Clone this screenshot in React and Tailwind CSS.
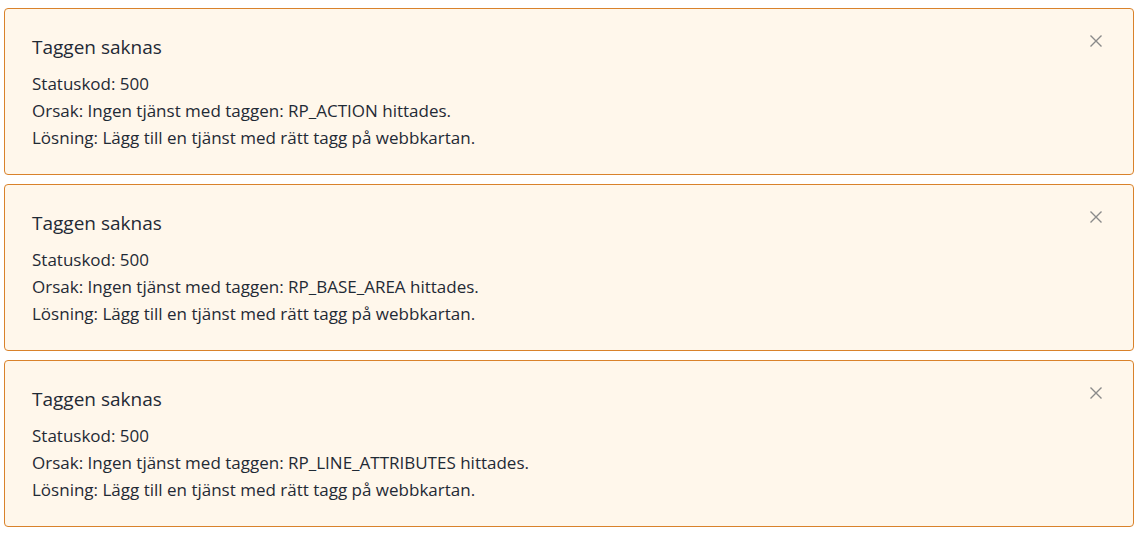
import React from "react";

const alerts = [
  { tag: "RP_ACTION" },
  { tag: "RP_BASE_AREA" },
  { tag: "RP_LINE_ATTRIBUTES" },
];

const CloseIcon = () => (
  <svg width="14" height="14" viewBox="0 0 14 14" fill="none">
    <path d="M1.5 1.5L12.5 12.5M12.5 1.5L1.5 12.5" stroke="#8a8a8a" strokeWidth="1.4" />
  </svg>
);

const TagAlert = ({ tag }) => {
  return (
    <div className="relative border border-[#d9822b] bg-[#fff7eb] rounded-[4px] pl-[27px] pr-10 pt-[24px] pb-[23px] text-[#1f2a35]">
      <button className="absolute right-[29px] top-[24px] w-4 h-4 flex items-center justify-center">
        <CloseIcon />
      </button>
      <h4 className="text-[19px] leading-[28px] mb-[9px]">Taggen saknas</h4>
      <div className="text-[17px] leading-[27px]">
        <p>Statuskod: 500</p>
        <p>Orsak: Ingen tjänst med taggen: {tag} hittades.</p>
        <p>Lösning: Lägg till en tjänst med rätt tagg på webbkartan.</p>
      </div>
    </div>
  );
};

const App = () => {
  return (
    <div
      className="w-full min-h-screen bg-white pl-[4px] pr-[5px] pt-[8px] flex flex-col gap-[9px]"
      style={{ fontFamily: '"Open Sans", "Noto Sans", sans-serif' }}
    >
      {alerts.map((a) => (
        <TagAlert key={a.tag} tag={a.tag} />
      ))}
    </div>
  );
};

export default App;
